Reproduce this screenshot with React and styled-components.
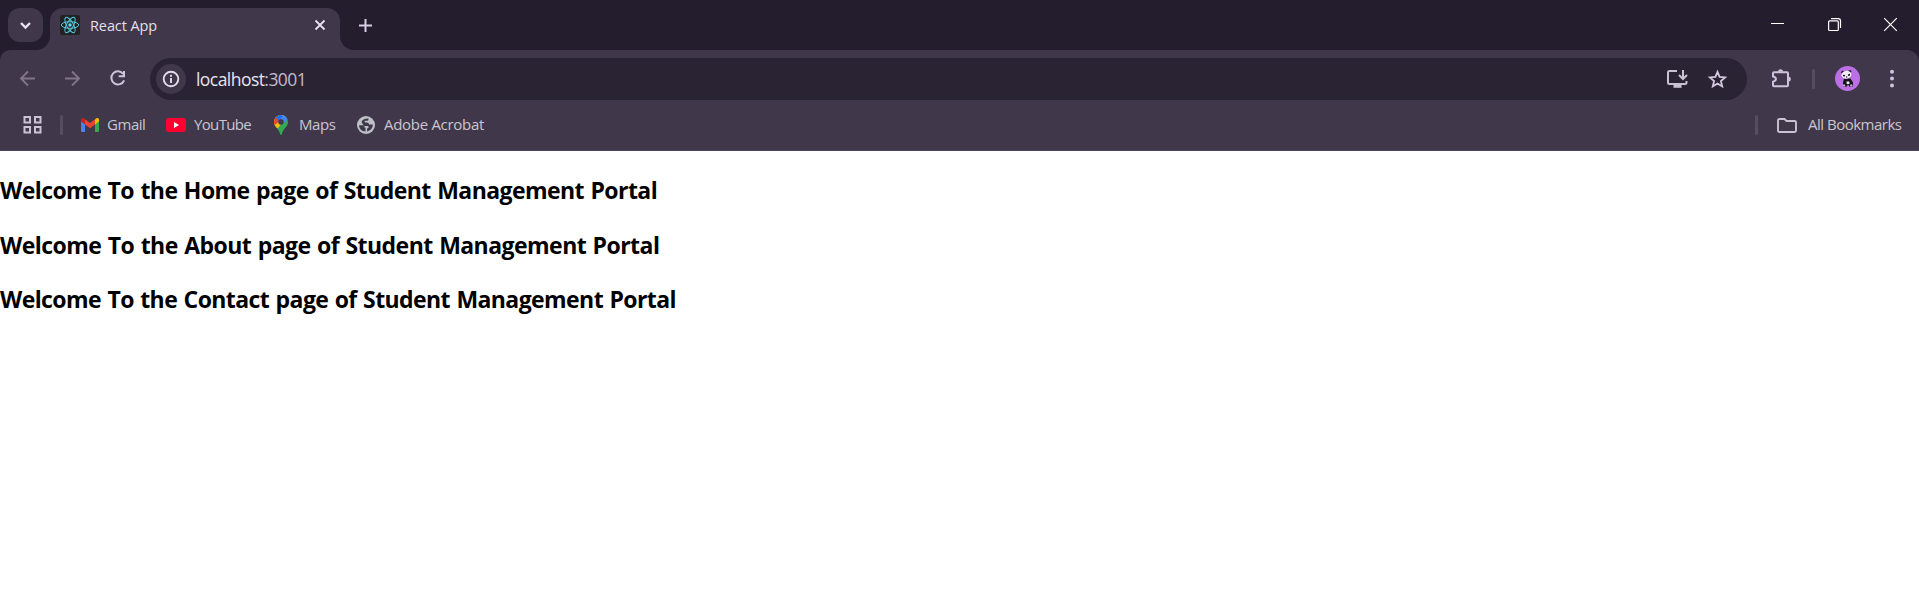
import React from "react";
import styled, { createGlobalStyle } from "styled-components";

const Global = createGlobalStyle`
  * { box-sizing: border-box; }
  body { margin: 0; background: #fff; font-family: "Open Sans", "Noto Sans", sans-serif; }
`;

const Browser = styled.div`
  background: #241d2e;
  height: 151px;
`;
const TabStrip = styled.div`
  display: flex;
  align-items: flex-start;
  height: 50px;
  padding: 8px 14px 0 8px;
`;
const TabSearch = styled.div`
  width: 35px;
  height: 34px;
  border-radius: 12px;
  background: #40374b;
  display: flex;
  align-items: center;
  justify-content: center;
`;
const Tab = styled.div`
  position: relative;
  display: flex;
  align-items: center;
  width: 290px;
  height: 42px;
  margin-left: 7px;
  padding: 0 15px 8px 10px;
  border-radius: 13px 13px 0 0;
  background: #40374b;
  &::before, &::after {
    content: "";
    position: absolute;
    bottom: 0;
    width: 14px;
    height: 14px;
  }
  &::before { left: -14px; background: radial-gradient(circle at 0 0, transparent 13.5px, #40374b 14.5px); }
  &::after { right: -14px; background: radial-gradient(circle at 100% 0, transparent 13.5px, #40374b 14.5px); }
`;
const Label = styled.span`
  display: block;
  flex: none;
  white-space: nowrap;
  font-size: ${p => p.$size || 15}px;
  line-height: 20px;
  padding-bottom: 2px;
  width: ${p => p.$w}px;
  letter-spacing: ${p => p.$ls || 0}px;
  color: ${p => p.$color || "#cbc5d0"};
`;
const TabTitle = styled(Label)`
  margin-left: 10px;
  padding: 1px 0 0;
  flex: 1;
`;
const NewTab = styled.div`
  display: flex;
  margin: 11px 0 0 19px;
`;
const WindowButtons = styled.div`
  display: flex;
  align-items: center;
  gap: 43.5px;
  margin: 10px 8px 0 auto;
`;
const Panel = styled.div`
  height: 101px;
  background: #40374b;
  border-radius: 10px 12px 0 0;
  border-bottom: 1px solid #4b4256;
`;
const Toolbar = styled.div`
  display: flex;
  align-items: center;
  height: 58px;
  padding: 0 16px 0 18px;
`;
const Navigation = styled.div`
  display: flex;
  gap: 25px;
  width: 132px;
`;
const Omnibox = styled.div`
  display: flex;
  align-items: center;
  width: 1597px;
  height: 42px;
  border-radius: 21px;
  background: #2a2334;
  padding: 0 19px 0 6px;
`;
const SiteInfo = styled.div`
  width: 30px;
  height: 30px;
  border-radius: 50%;
  background: #40374b;
  display: flex;
  align-items: center;
  justify-content: center;
`;
const Address = styled.div`
  flex: 1;
  margin-left: 10px;
  font-size: 17.5px;
  line-height: 24px;
  letter-spacing: -0.55px;
  color: #e9e3ee;
  span { color: #c2bbc9; }
`;
const OmniboxActions = styled.div`
  display: flex;
  gap: 19px;
`;
const ToolbarActions = styled.div`
  display: flex;
  align-items: center;
  flex: 1;
  margin-left: 24px;
`;
const Divider = styled.i`
  width: 3px;
  height: 20px;
  border-radius: 2px;
  background: #564d62;
  flex: none;
`;
const ToolbarDivider = styled(Divider)`
  margin-left: 19px;
`;
const Avatar = styled.div`
  display: flex;
  margin: 0 29px 1px 20px;
`;
const Bookmarks = styled.div`
  display: flex;
  align-items: center;
  height: 34px;
  padding: 0 17px 0 23px;
`;
const AppsDivider = styled(Divider)`
  margin: 0 18px 0 17px;
`;
const FolderDivider = styled(Divider)`
  margin-right: 8px;
`;
const Bookmark = styled.div`
  display: flex;
  align-items: center;
  gap: ${p => p.$gap || 8}px;
  margin-right: ${p => p.$after || 0}px;
`;
const AllBookmarks = styled(Bookmark)`
  margin-left: auto;
`;
const Svg = styled.svg`
  display: block;
  flex: none;
  overflow: visible;
`;
const Page = styled.main`
  display: flex;
  flex-direction: column;
  padding-top: 23px;
`;
const Heading = styled.h2`
  margin: 0 0 22.7px;
  font-size: 23px;
  font-weight: 700;
  line-height: 32px;
  letter-spacing: ${p => p.$ls}px;
  word-spacing: 1px;
  white-space: nowrap;
  color: #000;
`;

const Icon = ({ w = 20, h = w, color = "#cfc3dc", sw = 2, children }) => (
  <Svg width={w} height={h} viewBox={`0 0 ${w} ${h}`} fill="none" stroke={color} strokeWidth={sw}>
    {children}
  </Svg>
);

const ReactLogo = () => (
  <Icon w={20} color="#58c4dc" sw={1}>
    <rect width="20" height="20" rx="2" fill="#222" stroke="none" />
    <ellipse cx="10" cy="10" rx="8.7" ry="3.3" />
    <ellipse cx="10" cy="10" rx="8.7" ry="3.3" transform="rotate(60 10 10)" />
    <ellipse cx="10" cy="10" rx="8.7" ry="3.3" transform="rotate(120 10 10)" />
    <circle cx="10" cy="10" r="1.7" fill="#61dafb" stroke="none" />
  </Icon>
);

const Gmail = () => (
  <Icon w={18} h={14} sw={0}>
    <path d="M0 3v9.7Q0 14 1.3 14H4V6z" fill="#4285f4" />
    <path d="M14 6v8h2.7q1.3 0 1.3-1.3V3z" fill="#34a853" />
    <path d="M14 1.5V6.4l4-3V2c0-2-2-2.5-3.3-1.3z" fill="#fbbc04" />
    <path d="M4 6.4V1.2l5 3.8 5-3.8v5.2l-5 3.8z" fill="#ea4335" />
    <path d="M0 2v1.4l4 3V1.2l-.8-.6C1.8-.5 0 .3 0 2z" fill="#c5221f" />
  </Icon>
);

const YouTube = () => (
  <Icon w={20} h={14} sw={0}>
    <rect width="20" height="14" rx="3.2" fill="#ff0033" />
    <path d="M8 4l5 3-5 3z" fill="#fff" />
  </Icon>
);

const Maps = () => (
  <Icon w={14} h={20} sw={0}>
    <clipPath id="pin"><path d="M7 0a7 7 0 0 0-7 7c0 5 5 6.5 6.1 12q.9 1.8 1.8 0C9 13.5 14 12 14 7a7 7 0 0 0-7-7z" /></clipPath>
    <g clipPath="url(#pin)">
      <path d="M0 0h14v20H0z" fill="#34a853" />
      <path d="M0 0h14L4 13 0 14z" fill="#fbbc04" />
      <path d="M0 0h7L7 5 1.8 9.3 0 10z" fill="#ea4335" />
      <path d="M4.9 0h9v4.2L9 9z" fill="#4285f4" />
      <path d="M1.6 2.4L5 5.4 8.7 1.3 7 0H4z" fill="#1a73e8" />
    </g>
    <circle cx="7" cy="7" r="2.7" fill="#40374b" />
  </Icon>
);

const Globe = () => (
  <Icon w={18} sw={0}>
    <circle cx="9" cy="9" r="9" fill="#bdc1c6" />
    <path d="M11.5 2.500c.3 1.400-.5 2.300-1.900 2.300H8.300c-.8 0-1 1.300-.2 1.800h1.700c1.500 0 2.200.8 2.200 2h3.800c.2 3.300-2.300 6.200-5.700 7v-2.200c0-1 .6-1.700 1.600-1.700 0-1.200-.6-1.600-1.700-1.600H8.400C6.700 10.100 6 9 6 7.900c-1.300-.5-1.600-1.800-1-2.900C6 3.200 8.500 2.200 11.500 2.500z" fill="#40374b" />
    <path d="M2.100 9.300h3.700c1.100 0 1.700.7 1.700 1.700v.8h1v3.700C5 15.500 2 12.800 2.100 9.300z" fill="#40374b" />
  </Icon>
);

const Panda = () => (
  <Icon w={25} sw={0}>
    <circle cx="12.5" cy="12.5" r="12.5" fill="#ba70e4" />
    <circle cx="7.700" cy="6.200" r="1.500" fill="#221b29" />
    <circle cx="14.800" cy="5.500" r="1.600" fill="#221b29" />
    <path d="M9 12.500h6.500l2.500 4v4h-4l-.5-2h-1l-.5 2H8v-4z" fill="#17131c" />
    <ellipse cx="11.400" cy="8.800" rx="5" ry="3.900" fill="#f3edf5" transform="rotate(-8 11.4 8.800)" />
    <path d="M11.500 15.500h2.600l.7 1.800-1.300.7h-1.700z" fill="#f3edf5" />
    <path d="M8 8.700l2.200.4-.4 1.500-1.800-.3zM12.800 8.600l2.200-.8v1.600l-1.800.6z" fill="#17131c" />
    <circle cx="11.700" cy="11" r=".7" fill="#17131c" />
    <circle cx="9" cy="19.400" r="1.200" fill="#b9adc0" />
    <circle cx="16.300" cy="19.400" r="1.200" fill="#b9adc0" />
  </Icon>
);

export default function App() {
  return (
    <>
      <Global />
      <Browser>
        <TabStrip>
          <TabSearch>
            <Icon w={11} h={7} color="#e9e1f1" sw={2.4}><path d="M1 1l4.5 4.5L10 1" /></Icon>
          </TabSearch>
          <Tab>
            <ReactLogo />
            <TabTitle $size={14.5} $color="#e5dfea" $ls={-0.1}>React App</TabTitle>
            <Icon w={10} color="#e9e1f1" sw={1.8}><path d="M.5.5l9 9M9.5.5l-9 9" /></Icon>
          </Tab>
          <NewTab>
            <Icon w={13} color="#d8cde5" sw={2}><path d="M6.5 0v13M0 6.5h13" /></Icon>
          </NewTab>
          <WindowButtons>
            <Icon w={13} color="#fff" sw={1}><path d="M0 5.5h13" /></Icon>
            <Icon w={13} color="#fff" sw={1.2}><rect x=".6" y="2.9" width="9.7" height="9.6" rx="1" /><path d="M3 .6h7.3q2.2 0 2.2 2.2V10" /></Icon>
            <Icon w={13} color="#fff" sw={1.2}><path d="M.2.2l12.6 12.6M12.8.2L.2 12.8" /></Icon>
          </WindowButtons>
        </TabStrip>
        <Panel>
          <Toolbar>
            <Navigation>
              <Icon color="#80758b" sw={1.9}><path d="M17 9.5H3.5M10 2.5l-7 7 7 7" /></Icon>
              <Icon color="#80758b" sw={1.9}><path d="M2 9.5h13.5M9 2.5l7 7-7 7" /></Icon>
              <Icon><path d="M15.3 5A6.6 6.6 0 1 0 16.1 11.3" /><path d="M16 2v5.3h-5.3" /></Icon>
            </Navigation>
            <Omnibox>
              <SiteInfo>
                <Icon w={16} color="#e3dce9" sw={1.9}><circle cx="8" cy="8" r="7.3" /><path d="M8 7v5M8 3.8v2" /></Icon>
              </SiteInfo>
              <Address>localhost<span>:3001</span></Address>
              <OmniboxActions>
                <Icon w={23} h={20} color="#c9c2d0"><path d="M11 2H3.500Q2 2 2 3.500v10Q2 15 3.500 15h15.500q1.500 0 1.500-1.500V12" /><path d="M17 1v8.500M13 6l4 4 4-4" /><path d="M7.500 17.300h8" strokeWidth="3" /></Icon>
                <Icon color="#d3c8df" sw={1.8}><path d="M9.5 2.8l2.1 5.1 5.5.5-4.2 3.6 1.3 5.4-4.7-2.9-4.7 2.9 1.3-5.4L1.9 8.4l5.5-.5z" /></Icon>
              </OmniboxActions>
            </Omnibox>
            <ToolbarActions>
              <Icon w={22}><path d="M3 4.3h13q1 0 1 1v12q0 1-1 1H3q-1 0-1-1v-3.600q2.900-.6 2.900-2.600T2 8.500V5.300q0-1 1-1z" /><path d="M7 3.800a2.500 2.500 0 0 1 5 0zM17.500 8.800a2.400 2.400 0 0 1 0 4.800z" fill="#cfc3dc" stroke="none" /></Icon>
              <ToolbarDivider />
              <Avatar><Panda /></Avatar>
              <Icon w={6} h={20} sw={0}><g fill="#cfc3dc"><circle cx="3" cy="2.7" r="2" /><circle cx="3" cy="9.6" r="2" /><circle cx="3" cy="16.5" r="2" /></g></Icon>
            </ToolbarActions>
          </Toolbar>
          <Bookmarks>
            <Icon color="#cbc3d1"><path d="M1.5 2H7v5.5H1.5zM12 2h5.500v5.500H12zM1.500 12H7v5.500H1.500zM12 12h5.500v5.500H12z" /></Icon>
            <AppsDivider />
            <Bookmark $gap={8} $after={21}><Gmail /><Label $w={38} $ls={-0.45}>Gmail</Label></Bookmark>
            <Bookmark $after={22}><YouTube /><Label $w={58} $ls={-0.65}>YouTube</Label></Bookmark>
            <Bookmark $gap={11} $after={20}><Maps /><Label $w={38} $ls={-0.45}>Maps</Label></Bookmark>
            <Bookmark $gap={9}><Globe /><Label $w={101} $ls={-0.3}>Adobe Acrobat</Label></Bookmark>
            <AllBookmarks $gap={11}>
              <FolderDivider />
              <Icon h={15} color="#cbc3d1" sw={1.9}><path d="M2.5 1h5l2 2h8Q19 3 19 4.500v8q0 1.500-1.500 1.500h-15Q1 14 1 12.500v-10Q1 1 2.500 1z" /></Icon>
              <Label $w={94} $ls={-0.5}>All Bookmarks</Label>
            </AllBookmarks>
          </Bookmarks>
        </Panel>
      </Browser>
      <Page>
        <Heading $ls={-0.56}>Welcome To the Home page of Student Management Portal</Heading>
        <Heading $ls={-0.54}>Welcome To the About page of Student Management Portal</Heading>
        <Heading $ls={-0.58}>Welcome To the Contact page of Student Management Portal</Heading>
      </Page>
    </>
  );
}
